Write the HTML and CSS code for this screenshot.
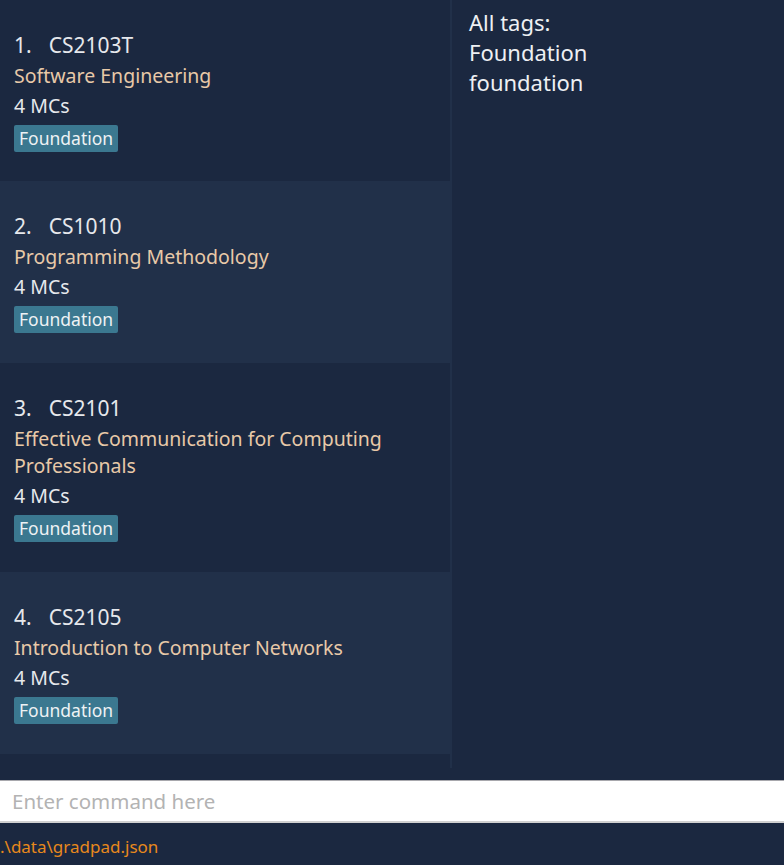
FILE: index.html
```html
<!DOCTYPE html>
<html>
<head>
<meta charset="utf-8">
<link rel="stylesheet" href="styles.css">
</head>
<body>
<div class="app">
  <div class="main">
    <div class="list">
      <div class="card">
        <div class="code"><span class="idx">1.</span>CS2103T</div>
        <div class="name">Software Engineering</div>
        <div class="mcs">4 MCs</div>
        <div class="tags"><span class="tag">Foundation</span></div>
      </div>
      <div class="card alt">
        <div class="code"><span class="idx">2.</span>CS1010</div>
        <div class="name">Programming Methodology</div>
        <div class="mcs">4 MCs</div>
        <div class="tags"><span class="tag">Foundation</span></div>
      </div>
      <div class="card tall">
        <div class="code"><span class="idx">3.</span>CS2101</div>
        <div class="name">Effective Communication for Computing Professionals</div>
        <div class="mcs">4 MCs</div>
        <div class="tags"><span class="tag">Foundation</span></div>
      </div>
      <div class="card alt">
        <div class="code"><span class="idx">4.</span>CS2105</div>
        <div class="name">Introduction to Computer Networks</div>
        <div class="mcs">4 MCs</div>
        <div class="tags"><span class="tag">Foundation</span></div>
      </div>
    </div>
    <div class="result">
      <div>All tags:</div>
      <div>Foundation</div>
      <div>foundation</div>
    </div>
  </div>
  <div class="command">
    <div class="input">Enter command here</div>
  </div>
  <div class="status">.\data\gradpad.json</div>
</div>
</body>
</html>
```
FILE: styles.css
```css
html, body {
  margin: 0;
  padding: 0;
  background: #1b2840;
  font-family: "Noto Sans", "Open Sans", sans-serif;
}
.app {
  width: 784px;
  height: 865px;
  display: flex;
  flex-direction: column;
  overflow: hidden;
}
.main {
  height: 768px;
  display: flex;
}
.list {
  width: 450px;
  border-right: 2px solid #213049;
}
.card {
  background: #1b2840;
  padding: 30px 14px 30px 14px;
  height: 181px;
  box-sizing: border-box;
}
.card.alt { background: #213049; height: 182px; }
.card.tall { height: 209px; }
.code {
  color: #e6e8ec;
  font-size: 21px;
  line-height: 30px;
}
.idx { margin-right: 17px; }
.name {
  color: #e8c9a8;
  font-size: 19.5px;
  line-height: 27px;
  margin-top: 2px;
}
.mcs {
  color: #e6e8ec;
  font-size: 19.5px;
  line-height: 30px;
  margin-top: 2px;
}
.tags { margin-top: 4px; display: flex; }
.tag {
  background: #3b7890;
  color: #eef2f4;
  font-size: 17.5px;
  line-height: 27px;
  padding: 0 5px;
  border-radius: 2px;
}
.result {
  flex: 1;
  padding: 7px 17px;
  color: #eef0f3;
  font-size: 22px;
  line-height: 30px;
}
.command {
  margin-top: 12px;
  background: #ffffff;
  border-top: 1px solid #a8a8ad;
  border-bottom: 2px solid #d0d0d0;
  height: 43px;
  box-sizing: border-box;
  display: flex;
  align-items: center;
  padding-left: 12px;
}
.input {
  color: #b3b3b3;
  font-size: 20.5px;
}
.status {
  flex: 1;
  color: #e8891c;
  font-size: 17px;
  padding-top: 13px;
  line-height: 22px;
}
```
